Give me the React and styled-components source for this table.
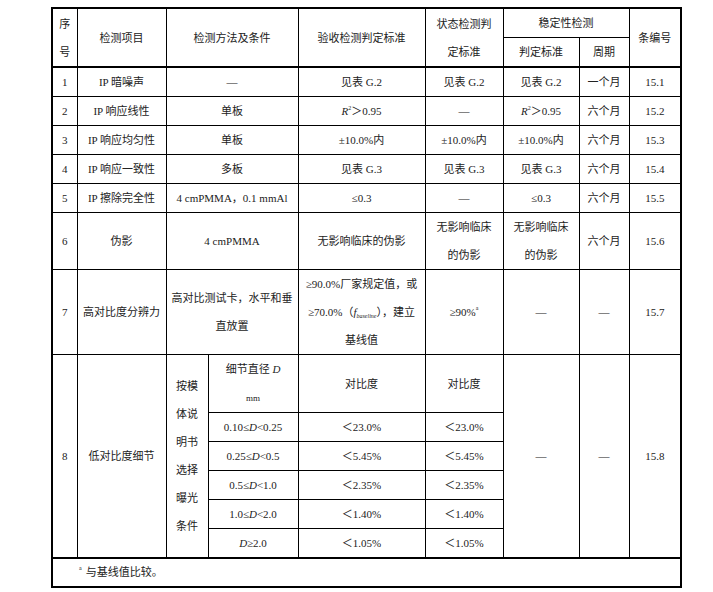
import styled, { createGlobalStyle } from "styled-components";

const GlobalStyle = createGlobalStyle`
  body {
    margin: 0;
    background: #fff;
  }
`;

const Page = styled.div`
  padding: 7px 0 0 51px;
`;

const Table = styled.table`
  border-collapse: collapse;
  table-layout: fixed;
  width: 629px;
  border: 2px solid #000;
  font-family: "Liberation Serif", "Noto Sans CJK SC", serif;
  font-size: 11px;
  color: #222;

  thead {
    border-bottom: 2px solid #000;
  }
  tfoot {
    border-top: 2px solid #000;
  }
`;

const Col = styled.col`
  width: ${(p) => p.$w}px;
`;

const Cell = styled.td`
  border: 1px solid #000;
  padding: 0;
  line-height: 28px;
  font-weight: normal;
  text-align: center;
  vertical-align: middle;
  white-space: nowrap;
`;

const NoteCell = styled(Cell)`
  text-align: left;
  padding-left: 26px;
  line-height: 27px;
`;

const Sup = styled.sup`
  font-size: 6px;
  line-height: 0;
  vertical-align: ${(p) => (p.$high ? "5px" : "6px")};
`;

const Sub = styled.sub`
  font-size: 6px;
  font-style: italic;
  line-height: 0;
  vertical-align: -2px;
`;

const Small = styled.span`
  font-size: 9px;
`;

const Gap = styled.span`
  margin-right: ${(p) => p.$r || 4}px;
`;

const widths = [25, 89, 42, 90, 127, 78, 76, 50, 52];

const simpleRows = [
  ["1", "IP 暗噪声", "—", "见表 G.2", "见表 G.2", "见表 G.2", "一个月", "15.1"],
  ["3", "IP 响应均匀性", "单板", "±10.0%内", "±10.0%内", "±10.0%内", "六个月", "15.3"],
  ["4", "IP 响应一致性", "多板", "见表 G.3", "见表 G.3", "见表 G.3", "六个月", "15.4"],
  ["5", "IP 擦除完全性", "4 cmPMMA，0.1 mmAl", "≤0.3", "—", "≤0.3", "六个月", "15.5"],
];

const detailRows = [
  [<>0.10≤<i>D</i>&lt;0.25</>, "＜23.0%", "＜23.0%"],
  [<>0.25≤<i>D</i>&lt;0.5</>, "＜5.45%", "＜5.45%"],
  [<>0.5≤<i>D</i>&lt;1.0</>, "＜2.35%", "＜2.35%"],
  [<>1.0≤<i>D</i>&lt;2.0</>, "＜1.40%", "＜1.40%"],
  [<><i>D</i>≥2.0</>, "＜1.05%", "＜1.05%"],
];

function SimpleRow({ cells }) {
  const [no, item, method, ...rest] = cells;
  return (
    <tr>
      <Cell>{no}</Cell>
      <Cell>{item}</Cell>
      <Cell colSpan={2}>{method}</Cell>
      {rest.map((c, i) => (
        <Cell key={i}>{c}</Cell>
      ))}
    </tr>
  );
}

const R2 = () => (
  <>
    <i>R</i>
    <Sup $high>2</Sup>＞0.95
  </>
);

export default function App() {
  return (
    <>
      <GlobalStyle />
      <Page>
        <Table>
          <colgroup>
            {widths.map((w, i) => (
              <Col key={i} $w={w} />
            ))}
          </colgroup>
          <thead>
            <tr>
              <Cell as="th" rowSpan={2}>
                序<br />号
              </Cell>
              <Cell as="th" rowSpan={2}>检测项目</Cell>
              <Cell as="th" rowSpan={2} colSpan={2}>
                检测方法及条件
              </Cell>
              <Cell as="th" rowSpan={2}>验收检测判定标准</Cell>
              <Cell as="th" rowSpan={2}>
                状态检测判
                <br />
                定标准
              </Cell>
              <Cell as="th" colSpan={2}>稳定性检测</Cell>
              <Cell as="th" rowSpan={2}>条编号</Cell>
            </tr>
            <tr>
              <Cell as="th">判定标准</Cell>
              <Cell as="th">周期</Cell>
            </tr>
          </thead>
          <tbody>
            <SimpleRow cells={simpleRows[0]} />
            <tr>
              <Cell>2</Cell>
              <Cell>IP 响应线性</Cell>
              <Cell colSpan={2}>单板</Cell>
              <Cell>
                <R2 />
              </Cell>
              <Cell>—</Cell>
              <Cell>
                <R2 />
              </Cell>
              <Cell>六个月</Cell>
              <Cell>15.2</Cell>
            </tr>
            {simpleRows.slice(1).map((r) => (
              <SimpleRow key={r[0]} cells={r} />
            ))}
            <tr>
              <Cell>6</Cell>
              <Cell>伪影</Cell>
              <Cell colSpan={2}>4 cmPMMA</Cell>
              <Cell>无影响临床的伪影</Cell>
              <Cell>
                无影响临床
                <br />
                的伪影
              </Cell>
              <Cell>
                无影响临床
                <br />
                的伪影
              </Cell>
              <Cell>六个月</Cell>
              <Cell>15.6</Cell>
            </tr>
            <tr>
              <Cell>7</Cell>
              <Cell>高对比度分辨力</Cell>
              <Cell colSpan={2}>
                高对比测试卡，水平和垂
                <br />
                直放置
              </Cell>
              <Cell>
                ≥90.0%厂家规定值，或
                <br />
                ≥70.0%（<i>f</i>
                <Sub>baseline</Sub>），建立
                <br />
                基线值
              </Cell>
              <Cell>
                ≥90%<Sup>a</Sup>
              </Cell>
              <Cell>—</Cell>
              <Cell>—</Cell>
              <Cell>15.7</Cell>
            </tr>
            <tr>
              <Cell rowSpan={6}>8</Cell>
              <Cell rowSpan={6}>低对比度细节</Cell>
              <Cell rowSpan={6}>
                按模
                <br />
                体说
                <br />
                明书
                <br />
                选择
                <br />
                曝光
                <br />
                条件
              </Cell>
              <Cell>
                细节直径 <i>D</i>
                <br />
                <Small>mm</Small>
              </Cell>
              <Cell>对比度</Cell>
              <Cell>对比度</Cell>
              <Cell rowSpan={6}>—</Cell>
              <Cell rowSpan={6}>—</Cell>
              <Cell rowSpan={6}>15.8</Cell>
            </tr>
            {detailRows.map((r, i) => (
              <tr key={i}>
                {r.map((c, j) => (
                  <Cell key={j}>{c}</Cell>
                ))}
              </tr>
            ))}
          </tbody>
          <tfoot>
            <tr>
              <NoteCell colSpan={9}>
                <Sup>a</Sup>
                <Gap $r={4} />
                与基线值比较。
              </NoteCell>
            </tr>
          </tfoot>
        </Table>
      </Page>
    </>
  );
}
